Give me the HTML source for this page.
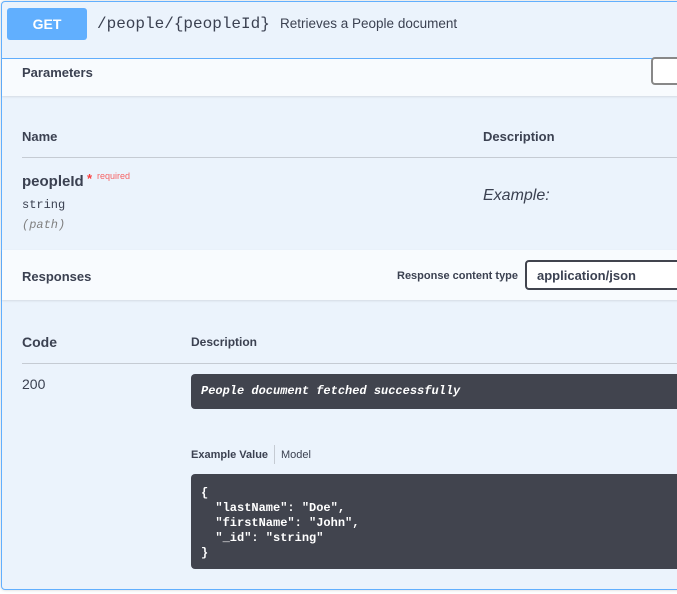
<!DOCTYPE html>
<html><head><style>
*{margin:0;padding:0;box-sizing:border-box}
body{width:677px;height:594px;background:#fff;font-family:"Liberation Sans",sans-serif;color:#3b4151;position:relative;overflow:hidden}
.a{position:absolute;white-space:nowrap}
.mono{font-family:"Liberation Mono",monospace}
</style></head><body>
<div class="a" style="left:1px;top:1px;width:690px;height:589px;border:1px solid #61affe;border-radius:4px;background:#ebf3fc;box-shadow:0 0 3px rgba(0,0,0,.19)"></div>
<div class="a" style="left:2px;top:58px;width:690px;height:1px;background:#61affe"></div>
<div class="a" style="left:7px;top:8px;width:80px;height:32px;background:#61affe;border-radius:3px;color:#fff;font-weight:bold;font-size:14px;text-align:center;line-height:32px">GET</div>
<div class="a mono" style="left:97px;top:13px;font-size:16px;color:#3b4151;line-height:22px">/people/{peopleId}</div>
<div class="a" style="left:280px;top:16px;font-size:13.5px;color:#3b4151">Retrieves a People document</div>
<div class="a" style="left:2px;top:59px;width:690px;height:37px;background:#f8fbfe;box-shadow:0 1px 2px rgba(0,0,0,.1)"></div>
<div class="a" style="left:22px;top:65px;font-size:13px;font-weight:bold;line-height:16px">Parameters</div>
<div class="a" style="left:651px;top:57px;width:40px;height:28px;border:2px solid #888;border-radius:4px;background:#fff"></div>
<div class="a" style="left:22px;top:129px;font-size:13px;font-weight:bold">Name</div>
<div class="a" style="left:483px;top:129px;font-size:13px;font-weight:bold">Description</div>
<div class="a" style="left:22px;top:157px;width:670px;height:1px;background:#c5cbd3"></div>
<div class="a" style="left:22px;top:173px;font-size:15px;font-weight:bold">peopleId</div>
<div class="a" style="left:87px;top:171px;font-size:13px;color:#f93e3e;font-weight:bold">*</div>
<div class="a" style="left:97px;top:171px;font-size:9px;color:#f93e3e;opacity:.8">required</div>
<div class="a mono" style="left:22px;top:198px;font-size:12px">string</div>
<div class="a mono" style="left:22px;top:218px;font-size:12px;font-style:italic;color:#808080">(path)</div>
<div class="a" style="left:483px;top:187px;font-size:16px;font-style:italic">Example:</div>
<div class="a" style="left:2px;top:250px;width:690px;height:50px;background:#f8fbfe;box-shadow:0 1px 2px rgba(0,0,0,.1)"></div>
<div class="a" style="left:22px;top:269px;font-size:13px;font-weight:bold">Responses</div>
<div class="a" style="left:397px;top:270px;font-size:11px;font-weight:bold">Response content type</div>
<div class="a" style="left:525px;top:260px;width:170px;height:30px;border:2px solid #41444e;border-radius:4px;background:#fff;font-size:13px;font-weight:bold;padding:6px 10px">application/json</div>
<div class="a" style="left:22px;top:334px;font-size:14px;font-weight:bold">Code</div>
<div class="a" style="left:191px;top:335px;font-size:12px;font-weight:bold">Description</div>
<div class="a" style="left:22px;top:363px;width:670px;height:1px;background:#c5cbd3"></div>
<div class="a" style="left:22px;top:376px;font-size:14px">200</div>
<div class="a" style="left:191px;top:374px;width:500px;height:35px;background:#41444e;border-radius:4px"></div>
<div class="a mono" style="left:201px;top:384px;font-size:12px;font-style:italic;color:#fff;font-weight:bold">People document fetched successfully</div>
<div class="a" style="left:191px;top:449px;font-size:11px;font-weight:bold">Example Value</div>
<div class="a" style="left:274px;top:445px;width:1px;height:19px;background:#c5cbd3"></div>
<div class="a" style="left:281px;top:449px;font-size:11px">Model</div>
<div class="a" style="left:191px;top:474px;width:500px;height:95px;background:#41444e;border-radius:4px"></div>
<pre class="a mono" style="left:201px;top:486px;font-size:12px;line-height:15px;color:#fff;font-weight:bold;white-space:pre">{
  "lastName": "Doe",
  "firstName": "John",
  "_id": "string"
}</pre>
</body></html>
